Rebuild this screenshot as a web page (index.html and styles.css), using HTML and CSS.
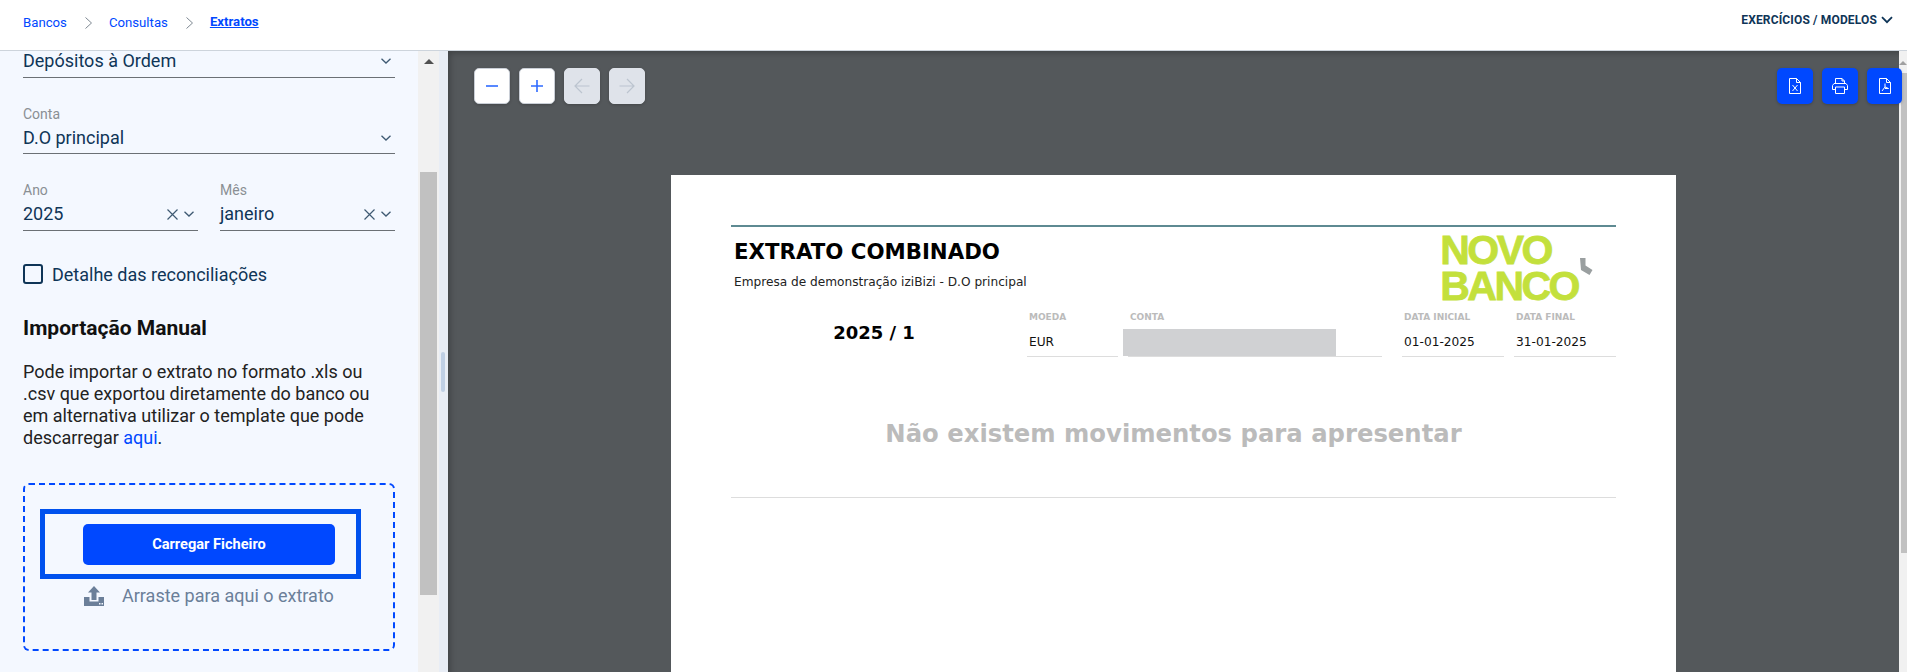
FILE: index.html
```html
<!DOCTYPE html>
<html lang="pt">
<head>
  <meta charset="UTF-8">
  <title>Bancos - Extratos</title>
  <link rel="stylesheet" href="styles.css">
</head>
<body>
  <!-- HEADER -->
  <header class="topbar">
    <nav class="crumbs">
      <a href="#">Bancos</a>
      <svg class="crumb-sep" viewBox="0 0 7 12"><path d="M.5.500 6.500 6l-6 5.500"/></svg>
      <a href="#">Consultas</a>
      <svg class="crumb-sep" viewBox="0 0 7 12"><path d="M.5.500 6.500 6l-6 5.500"/></svg>
      <a href="#" class="crumb-current">Extratos</a>
    </nav>
    <div class="topbar-menu">
      EXERCÍCIOS / MODELOS
      <svg class="menu-chevron" viewBox="0 0 12 8"><path d="M1 1.200 6 6.200l5-5"/></svg>
    </div>
  </header>

  <div class="workspace">
    <!-- SIDEBAR -->
    <aside class="sidebar">
      <div class="field">
        <div class="field-row">
          <span class="field-value">Depósitos à Ordem</span>
          <svg class="chevron" viewBox="0 0 10 6"><path d="M.5.700 5 5l4.500-4.300"/></svg>
        </div>
      </div>

      <div class="field field-labelled">
        <label>Conta</label>
        <div class="field-row">
          <span class="field-value">D.O principal</span>
          <svg class="chevron" viewBox="0 0 10 6"><path d="M.5.700 5 5l4.500-4.300"/></svg>
        </div>
      </div>

      <div class="field-pair">
        <div class="field">
          <label>Ano</label>
          <div class="field-row">
            <span class="field-value">2025</span>
            <svg class="clear" viewBox="0 0 11 11"><path d="m.5.500 10 10m0-10-10 10"/></svg>
            <svg class="chevron" viewBox="0 0 10 6"><path d="M.5.700 5 5l4.500-4.300"/></svg>
          </div>
        </div>
        <div class="field">
          <label>Mês</label>
          <div class="field-row">
            <span class="field-value">janeiro</span>
            <svg class="clear" viewBox="0 0 11 11"><path d="m.5.500 10 10m0-10-10 10"/></svg>
            <svg class="chevron" viewBox="0 0 10 6"><path d="M.5.700 5 5l4.500-4.300"/></svg>
          </div>
        </div>
      </div>

      <div class="check-row">
        <span class="checkbox"></span>
        Detalhe das reconciliações
      </div>

      <h2 class="section-title">Importação Manual</h2>
      <p class="section-text">
        Pode importar o extrato no formato .xls ou<br>
        .csv que exportou diretamente do banco ou<br>
        em alternativa utilizar o template que pode<br>
        descarregar <a href="#">aqui</a>.
      </p>

      <div class="dropzone">
        <div class="upload-focus">
          <button class="upload-button">Carregar Ficheiro</button>
        </div>
        <div class="drop-hint">
          <svg class="drop-icon" viewBox="0 0 20 20">
            <path d="M10 0 16 6.500h-3.500V14h-5V6.500H4z"/>
            <path d="M0 11h5.500v4.500h9V11H20v9H0z"/>
            <rect x="15" y="17" width="1.500" height="1.500" fill="#f4f8ff"/>
            <rect x="17.500" y="17" width="1.500" height="1.500" fill="#f4f8ff"/>
          </svg>
          <span>Arraste para aqui o extrato</span>
        </div>
      </div>
    </aside>

    <!-- SIDEBAR SCROLLBAR -->
    <div class="side-scroll">
      <span class="arrow-up"></span>
      <div class="side-thumb"></div>
    </div>

    <!-- SPLITTER -->
    <div class="splitter"><div class="splitter-handle"></div></div>

    <!-- PDF VIEWER -->
    <main class="viewer">
      <div class="viewer-tools">
        <div class="tool-group">
          <button class="tool">
            <svg viewBox="0 0 14 14"><path d="M1 7h12"/></svg>
          </button>
          <button class="tool">
            <svg viewBox="0 0 14 14"><path d="M1 7h12M7 1v12"/></svg>
          </button>
          <button class="tool tool-off">
            <svg viewBox="0 0 16 16"><path d="M15.500 8H.8M8 1 1 8l7 7"/></svg>
          </button>
          <button class="tool tool-off">
            <svg viewBox="0 0 16 16"><path d="M.5 8h14.700M8 1l7 7-7 7"/></svg>
          </button>
        </div>
        <div class="tool-group tool-group-export">
          <button class="tool tool-blue">
            <svg class="doc-icon" viewBox="0 0 12 16"><path d="M.5.500h7l4 4v11H.5zM7.500.500v4h4M3.500 7l5 6M8.500 7l-5 6"/></svg>
          </button>
          <button class="tool tool-blue">
            <svg class="print-icon" viewBox="0 0 16 16"><path d="M3.500 5.500V.5h6.500l2.500 2.500v2.500M3.500 11.500h-3v-4l1.500-2h12l1.500 2v4h-3M3.500 9h9v6.500h-9zM10 .5V3h2.500"/></svg>
          </button>
          <button class="tool tool-blue">
            <svg class="doc-icon" viewBox="0 0 12 16"><path d="M.5.500h7l4 4v11H.5zM7.500.500v4h4M6 5.500V9l-3 4M6 9l3.500 1.500H6"/></svg>
          </button>
        </div>
      </div>

      <section class="sheet">
        <div class="sheet-rule"></div>
        <div class="sheet-head">
          <div>
            <h1 class="sheet-title">EXTRATO COMBINADO</h1>
            <p class="sheet-sub">Empresa de demonstração iziBizi - D.O principal</p>
          </div>
          <div class="bank-logo">
            <span class="bank-name">NOVO<br>BANCO</span>
            <svg class="bank-mark" viewBox="0 0 13 18"><path d="M0 0h5.500v7.500l7 4.500-3 5L1 12z"/></svg>
          </div>
        </div>
        <div class="sheet-meta">
          <div class="sheet-period">2025 / 1</div>
          <div class="meta-cell">
            <span class="meta-label">MOEDA</span>
            <span class="meta-value">EUR</span>
          </div>
          <div class="meta-cell meta-account">
            <span class="meta-label">CONTA</span>
            <span class="meta-value"><span class="meta-hidden"></span>&nbsp;</span>
          </div>
          <div class="meta-cell">
            <span class="meta-label">DATA INICIAL</span>
            <span class="meta-value">01-01-2025</span>
          </div>
          <div class="meta-cell">
            <span class="meta-label">DATA FINAL</span>
            <span class="meta-value">31-01-2025</span>
          </div>
        </div>
        <p class="sheet-empty">Não existem movimentos para apresentar</p>
        <div class="sheet-line"></div>
      </section>
    </main>

    <!-- VIEWER SCROLLBAR -->
    <div class="page-scroll">
      <span class="arrow-up arrow-small"></span>
      <div class="page-thumb"></div>
    </div>
  </div>
</body>
</html>
```

FILE: styles.css
```css
/* Reset & Body Setup */
* {
  margin: 0;
  padding: 0;
  box-sizing: border-box;
}
body {
  font-family: Roboto, sans-serif;
  height: 672px;
  overflow: hidden;
  display: flex;
  flex-direction: column;
  background-color: #fff;
}
a {
  color: #0048ff;
  text-decoration: none;
}
svg {
  display: block;
  flex: none;
}

/* Header */
.topbar {
  height: 51px;
  flex: none;
  display: flex;
  justify-content: space-between;
  border-bottom: 1px solid #cdd4dc;
  padding: 0 14px 0 23px;
}
.crumbs {
  display: flex;
  align-items: center;
  height: 45px;
  font-size: 13.200px;
}
.crumb-sep {
  width: 7px;
  height: 12px;
  margin: 0 17px 0 18px;
  fill: none;
  stroke: #7d8791;
}
.crumb-current {
  font-weight: 700;
  text-decoration: underline;
  margin-top: -2px;
}
.topbar-menu {
  display: flex;
  align-items: center;
  gap: 4px;
  height: 39px;
  font-size: 12px;
  font-weight: 700;
  color: #0f3557;
  letter-spacing: .15px;
}
.menu-chevron {
  width: 12px;
  height: 8px;
  fill: none;
  stroke: #0f3557;
  stroke-width: 1.8;
}

.workspace {
  flex: 1;
  display: flex;
  min-height: 0;
}

/* Sidebar */
.sidebar {
  width: 418px;
  flex: none;
  background-color: #f4f8ff;
  padding: 0 23px;
}
.field label {
  display: block;
  font-size: 14px;
  line-height: 20px;
  color: #8a8f94;
  margin-bottom: 3px;
}
.field-labelled {
  margin-top: 26px;
}
.field-row {
  display: flex;
  align-items: center;
  height: 27px;
  padding: 0 4px 6px 0;
  border-bottom: 1px solid #6b7075;
  color: #0f3557;
}
.field-labelled .field-row {
  padding-bottom: 4px;
}
.field-value {
  flex: 1;
  font-size: 18px;
  line-height: 20px;
}
.chevron {
  width: 10px;
  height: 6px;
  fill: none;
  stroke: #3f5a73;
  stroke-width: 1.300;
}
.clear {
  width: 11px;
  height: 11px;
  margin-right: 6px;
  fill: none;
  stroke: #3f5a73;
  stroke-width: 1.200;
}
.field-pair {
  display: grid;
  grid-template-columns: 175px 175px;
  gap: 22px;
  margin-top: 26px;
}
.field-pair label {
  margin-bottom: 4px;
}
.check-row {
  display: flex;
  align-items: center;
  gap: 9px;
  margin-top: 33px;
  height: 20px;
  font-size: 18px;
  color: #0f3557;
}
.checkbox {
  width: 20px;
  height: 20px;
  border: 2px solid #0f3557;
  border-radius: 3px;
}
.section-title {
  margin-top: 32px;
  font-size: 21px;
  line-height: 24px;
  font-weight: 700;
  color: #111;
}
.section-text {
  margin-top: 21px;
  font-size: 18px;
  line-height: 22px;
  color: #222;
}
.dropzone {
  margin-top: 34px;
  height: 168px;
  padding: 24px 32px 0 15px;
  border: 2px dashed #0048ff;
  border-radius: 6px;
}
.upload-focus {
  height: 70px;
  padding: 10px 0 0 38px;
  border: 5px solid #0051ee;
}
.upload-button {
  display: block;
  width: 252px;
  height: 41px;
  padding-bottom: 2px;
  border: none;
  border-radius: 5px;
  background-color: #0048ff;
  color: #fff;
  font-family: Roboto, sans-serif;
  font-size: 14.600px;
  font-weight: 700;
}
.drop-hint {
  display: flex;
  align-items: center;
  gap: 18px;
  margin: 5px 0 0 44px;
  height: 22px;
  font-size: 18px;
  color: #6b7f99;
}
.drop-icon {
  width: 20px;
  height: 20px;
  margin-top: 2px;
  fill: #6b7f99;
}

/* Scrollbars & splitter */
.side-scroll {
  width: 21px;
  flex: none;
  background-color: #f1f1f1;
  padding-top: 8px;
}
.arrow-up {
  display: block;
  width: 0;
  height: 0;
  margin: 0 auto;
  border-left: 5px solid transparent;
  border-right: 5px solid transparent;
  border-bottom: 5px solid #505050;
}
.side-thumb {
  width: 17px;
  height: 423px;
  margin: 108px 0 0 2px;
  background-color: #c1c1c1;
}
.splitter {
  width: 9px;
  flex: none;
  background-color: #e8edf5;
  padding: 301px 3px 0 2px;
}
.splitter-handle {
  height: 40px;
  border-radius: 3px;
  background-color: #bfcfe4;
}
.page-scroll {
  width: 8px;
  flex: none;
  background-color: #f1f1f1;
  padding-top: 10px;
}
.arrow-small {
  border-left-width: 4px;
  border-right-width: 4px;
  border-bottom-width: 4px;
  border-bottom-color: #a0a0a0;
}
.page-thumb {
  height: 480px;
  margin: 8px 0 0 2px;
  background-color: #c1c1c1;
}

/* PDF viewer */
.viewer {
  flex: 1;
  min-width: 0;
  background-color: #54585b;
  box-shadow: inset 5px 5px 6px -3px rgba(0,0,0,0.25);
  position: relative;
  z-index: 1;
}
.viewer-tools {
  display: flex;
  justify-content: space-between;
  padding: 17px 0 0 26px;
  margin-right: -3px;
}
.tool-group {
  display: flex;
  gap: 9px;
}
.tool {
  width: 36px;
  height: 36px;
  display: flex;
  align-items: center;
  justify-content: center;
  background-color: #fff;
  border: 1px solid #c9ced6;
  border-radius: 5px;
  box-shadow: 0 1px 3px rgba(0,0,0,0.2);
}
.tool svg {
  width: 14px;
  height: 14px;
  fill: none;
  stroke: #2f6bff;
  stroke-width: 1.600;
}
.tool-off {
  background-color: #dfe3ea;
  border-color: #dfe3ea;
}
.tool-off svg {
  width: 16px;
  height: 16px;
  stroke: #bcc4cf;
  stroke-width: 1.200;
}
.tool-blue {
  background-color: #0048ff;
  border: none;
}
.tool-group-export .tool:last-child {
  width: 35px;
}
.tool-blue svg {
  stroke: #fff;
  stroke-width: 1;
}
.tool-blue .doc-icon {
  width: 12px;
  height: 16px;
}
.tool-blue .print-icon {
  width: 16px;
  height: 16px;
}

/* Sheet */
.sheet {
  width: 1005px;
  height: 900px;
  margin: 71px 0 0 223px;
  padding: 50px 60px 0 60px;
  background-color: #fff;
  font-family: "DejaVu Sans", sans-serif;
}
.sheet-rule {
  height: 2px;
  background-color: #5e8a92;
}
.sheet-head {
  display: flex;
  justify-content: space-between;
  padding: 12px 0 0 3px;
  height: 79px;
}
.sheet-title {
  font-size: 21.300px;
  line-height: 25px;
  font-weight: 700;
  color: #000;
}
.sheet-sub {
  margin-top: 10px;
  font-size: 12.150px;
  line-height: 16px;
  color: #222;
}
.bank-logo {
  display: flex;
  align-items: center;
  height: 68px;
  margin: -5px 23px 0 0;
}
.bank-name {
  font-family: "Liberation Sans", sans-serif;
  font-size: 41px;
  line-height: 36px;
  font-weight: 700;
  letter-spacing: -2.500px;
  color: #c3e03c;
  -webkit-text-stroke: .8px #c3e03c;
}
.bank-mark {
  width: 13px;
  height: 18px;
  margin: -2px 0 0 2px;
  fill: #9a9fa0;
}
.sheet-meta {
  display: grid;
  grid-template-columns: 286px 91px 264px 102px 102px;
  column-gap: 10px;
  height: 51px;
  align-items: end;
}
.sheet-period {
  text-align: center;
  font-size: 18px;
  line-height: 22px;
  font-weight: 700;
  color: #000;
  padding: 0 0 13px 0;
}
.meta-cell {
  border-bottom: 1px solid #ddd;
  padding: 0 2px;
}
.meta-account {
  margin-right: 10px;
}
.meta-label {
  display: block;
  font-size: 9px;
  line-height: 12px;
  font-weight: 700;
  color: #bbb;
}
.meta-value {
  display: block;
  position: relative;
  margin-top: 11px;
  font-size: 12.200px;
  line-height: 17px;
  padding-bottom: 5px;
  color: #111;
}
.meta-hidden {
  position: absolute;
  left: -7px;
  bottom: 0;
  width: 213px;
  height: 27px;
  background-color: #d0d1d3;
}
.sheet-empty {
  margin-top: 61px;
  text-align: center;
  font-size: 24.300px;
  line-height: 32px;
  font-weight: 700;
  color: #bbb;
}
.sheet-line {
  margin-top: 47px;
  height: 1px;
  background-color: #ddd;
}
```
